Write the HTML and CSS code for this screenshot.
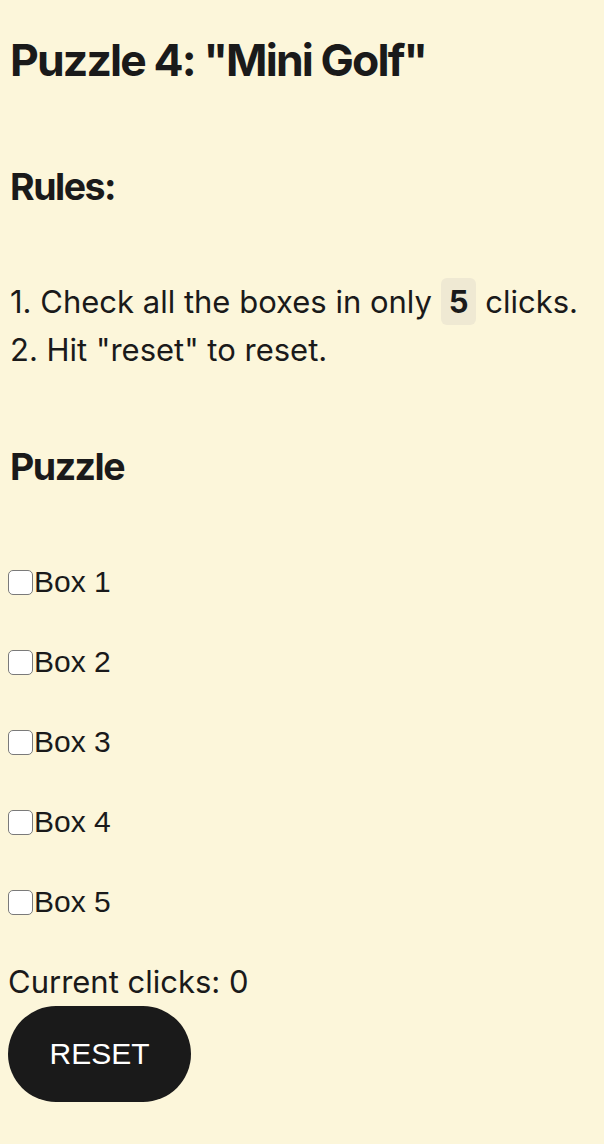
FILE: index.html
```html
<!DOCTYPE html>
<html lang="en">
<head>
  <meta charset="UTF-8">
  <title>Puzzle 4</title>
  <link rel="stylesheet" href="styles.css">
</head>
<body>

<h1>Puzzle 4: "Mini Golf"</h1>

<h2 class="rules-title">Rules:</h2>
<p class="rules">
  1. Check all the boxes in only <code>5</code> clicks.<br>
  2. Hit "reset" to reset.
</p>

<h2 class="puzzle-title">Puzzle</h2>

<div class="boxes">
  <div class="box-row"><input type="checkbox" id="box1"><label for="box1">Box 1</label></div>
  <div class="box-row"><input type="checkbox" id="box2"><label for="box2">Box 2</label></div>
  <div class="box-row"><input type="checkbox" id="box3"><label for="box3">Box 3</label></div>
  <div class="box-row"><input type="checkbox" id="box4"><label for="box4">Box 4</label></div>
  <div class="box-row"><input type="checkbox" id="box5"><label for="box5">Box 5</label></div>
</div>

<p class="clicks">Current clicks: <span id="clicks">0</span></p>
<button class="reset-button" type="button">RESET</button>

</body>
</html>
```

FILE: styles.css
```css
body {
  margin: 0;
  padding: 0 8px;
  background: #fcf6da;
  color: #1a1a1a;
  font-family: 'Inter', sans-serif;
  font-size: 31px;
}

h1 {
  margin: 0;
  padding-top: 30px;
  padding-left: 2px;
  font-size: 44.5px;
  line-height: 60px;
  letter-spacing: -0.042em;
}

h2 {
  margin: 0;
  padding-left: 2px;
  font-size: 37.5px;
  line-height: 50px;
  letter-spacing: -0.04em;
}

.rules-title {
  margin-top: 72px;
}

.puzzle-title {
  margin-top: 68px;
}

.rules {
  margin: 66px 0 0;
  padding-left: 2px;
  line-height: 48px;
}

code {
  font-family: 'Inter', sans-serif;
  font-weight: bold;
  background: #efe9d3;
  border-radius: 6px;
  padding: 5px 8px;
}

.boxes {
  margin-top: 50px;
  font-family: 'Liberation Sans', Arial, sans-serif;
  font-size: 30px;
}

.box-row {
  display: flex;
  align-items: center;
  height: 80px;
}

.box-row input {
  appearance: none;
  -webkit-appearance: none;
  margin: 0 1px 0 0;
  width: 25px;
  height: 25px;
  background: white;
  border: 1.5px solid #7a7a7a;
  border-radius: 5px;
}

.box-row input:checked {
  background: #1a1a1a;
  border-color: #1a1a1a;
}

.clicks {
  margin: 22px 0 0;
  line-height: 36px;
}

.reset-button {
  margin-top: 6px;
  width: 183px;
  height: 96px;
  border: none;
  border-radius: 48px;
  background: #1a1a1a;
  color: white;
  font-family: 'Liberation Sans', Arial, sans-serif;
  font-size: 30px;
}
```
